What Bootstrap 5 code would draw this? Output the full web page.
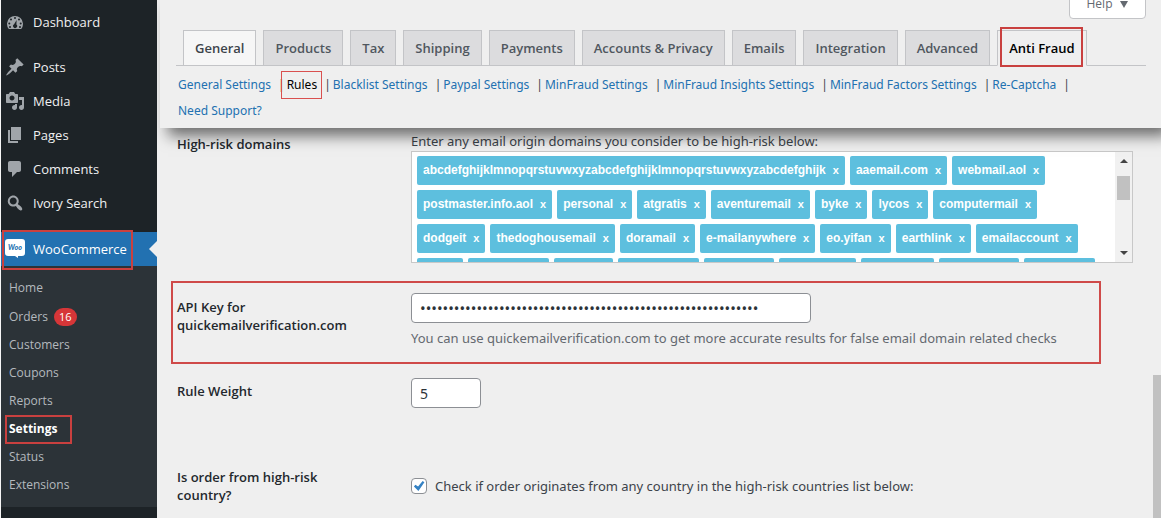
<!DOCTYPE html>
<html lang="en">
<head>
<meta charset="utf-8">
<meta name="viewport" content="width=device-width, initial-scale=1">
<title>WooCommerce Settings – Anti Fraud</title>
<link href="https://cdn.jsdelivr.net/npm/bootstrap@5.3.0/dist/css/bootstrap.min.css" rel="stylesheet">
<style>
  body { font: 13px/20px "Open Sans", "Noto Sans", sans-serif; color: #3c434a; background: #efefef; }
  a { text-decoration: none; }

  /* Sidebar */
  .admin-menu { width: 157px; background: #1d2327; border-left: 1px solid #f6f6f6; padding-top: 5px; }
  .menu-link { height: 34px; padding-left: 4px; gap: 8px; color: #f0f0f1; white-space: nowrap; }
  .menu-link svg { width: 20px; height: 20px; fill: #a0a5aa; flex: none; }
  .menu-gap { margin-bottom: 11px; }
  .menu-gap-end { margin-bottom: 12px; }
  .menu-link.current { background: #2271b1; color: #fff; position: relative; }
  .menu-link.current::after { content: ""; position: absolute; right: 0; top: 9px; border: 8px solid transparent; border-left: 0; border-right-color: #efefef; }
  .sub-menu { background: #2c3338; padding: 8px 0 8px; }
  .sub-menu a { height: 28px; padding-left: 8px; gap: 6px; color: #b4b9be; font-size: 12px; }
  .sub-menu a.with-count { height: 29px; }
  .sub-menu a.active { color: #fff; font-weight: 700; }
  .count { background: #d63638; color: #fff; font-size: 11px; line-height: 18px; padding: 0 5px; }
  .marked { position: relative; }
  .marked::before { content: ""; position: absolute; border: 2px solid #c9403f; pointer-events: none; z-index: 1; }
  .mark-woo::before { left: 1px; top: -2px; width: 131px; height: 40px; }
  .mark-settings::before { left: 4px; top: 0; width: 67px; height: 29px; }
  .mark-tab::before { inset: -4px 3px -2px 2px; }
  .mark-rules::before { inset: -5px -5px -6px -6px; border: 1px solid #d9504f; }

  /* Header */
  .top-bar { z-index: 2; height: 128px; margin-left: 3px; padding: 0 15px 0 16px; background: #efefef; box-shadow: 8px 8px 14px rgba(0,0,0,.55); }
  .help-btn { height: 27px; margin-top: -8px; width: 77px; padding: 0 0 3px; background: #fff; border: 1px solid #c3c4c7; border-radius: 0 0 4px 4px; color: #646970; font-size: 12px; line-height: 22px; gap: 8px; }
  .help-btn::after { content: ""; border: 4px solid transparent; border-top: 7px solid #646970; border-bottom: 0; }
  .tab-bar { margin-top: 11px; padding-left: 7px; gap: 7px; border-bottom: 1px solid #c3c4c7; }
  .tab-bar a { height: 36px; margin-bottom: -1px; padding: 0 11px; border: 1px solid #c3c4c7; background: #dcdcde; color: #50575e; font-weight: 600; line-height: 34px; white-space: nowrap; }
  .tab-bar a.hovered { background: #f6f6f6; color: #3c434a; }
  .tab-bar a.active { background: #efefef; border-bottom-color: #efefef; color: #000; }
  .section-links { padding: 6px 0 0 2px; font-family: "Noto Sans", sans-serif; font-size: 12px; line-height: 26px; }
  .section-links a { color: #2271b1; line-height: 18px; }
  .section-links a.active { color: #000; }
  .section-links li:not(:first-child, .support)::before { content: "|"; margin: 0 2px 0 7px; }

  /* Form */
  .settings { padding: 3px 0 0 14px; font-family: "Noto Sans", sans-serif; }
  .field-row { padding-left: 6px; }
  .field-label { width: 234px; padding-right: 60px; font-family: "Open Sans", sans-serif; line-height: 18px; font-weight: 600; color: #23282d; }
  .field-body { min-width: 0; flex: 1; }
  .domain-box { height: 112px; margin-right: 28px; background: #fff; border: 1px solid #c8c8c8; }
  .chip-area { padding: 4px 5px; gap: 5px; }
  .chip { height: 29px; padding: 0 6px; background: #5dbfde; border-radius: 2px; color: #fff; font: bold 12px/28px "Liberation Sans", Arial, sans-serif; white-space: nowrap; }
  .chip button { border: 0; padding: 0; margin-left: 7px; background: none; color: inherit; font: bold 11px/28px "Liberation Sans", Arial, sans-serif; }
  .scroll-rail { width: 17px; flex: none; background: #f1f1f1; padding: 7px 0; }
  .scroll-rail .thumb { width: 13px; height: 24px; margin-top: 13px; background: #c1c1c1; }
  .arrow-up, .arrow-down { border: 4px solid transparent; }
  .arrow-up { border-top: 0; border-bottom-color: #444; }
  .arrow-down { border-bottom: 0; border-top-color: #444; }
  .boxed { margin: 18px 60px 14px 0; padding: 10px 0 14px 4px; border: 2px solid #cf4a49; }
  .boxed .field-label { padding-top: 5px; }
  .text-field { height: 30px; padding: 0 8px; border: 1px solid #8c8f94; border-radius: 4px; color: #2c3338; background: #fff; font-size: 14px; }
  .key-field { width: 400px; font-size: 15px; }
  .weight-field { width: 70px; }
  .weight-row { margin-bottom: 60px; }
  .hint { color: #646970; padding-top: 5px; }
  .tick { appearance: none; width: 16px; height: 16px; margin: 0; border: 1px solid #8c8f94; border-radius: 4px; background: #fff; }
  .tick:checked { background: #fff url("data:image/svg+xml,%3Csvg xmlns='http://www.w3.org/2000/svg' viewBox='0 0 20 20'%3E%3Cpath d='M14.8 3.3L17.2 5 9.2 16.7 3.2 10.8l2-2.4 3.6 2.4z' fill='%233582c4'/%3E%3C/svg%3E") center/15px; }
  .page-thumb { right: 0; top: 375px; bottom: 0; width: 8px; background: #c1c1c1; }
</style>
</head>
<body>
<div class="d-flex vh-100 overflow-hidden position-relative">
  <nav class="admin-menu flex-shrink-0" aria-label="Admin">
    <a href="#" class="menu-link menu-gap d-flex align-items-center"><svg viewBox="0 0 20 20"><path fill-rule="evenodd" d="M3.8 17h12.4A8 8 0 1 0 3.8 17zM10 5a1 1 0 1 1 0 2 1 1 0 0 1 0-2zM6 6.5a1 1 0 1 1 0 2 1 1 0 0 1 0-2zM14 6.5a1 1 0 1 1 0 2 1 1 0 0 1 0-2zM4.300 10.500a1 1 0 1 1 0 2 1 1 0 0 1 0-2zM15.700 10.500a1 1 0 1 1 0 2 1 1 0 0 1 0-2zM11.600 8l-.2 4.500a2 2 0 1 1-2.300-.2zM5 14a1 1 0 1 1 0 2 1 1 0 0 1 0-2zM15 14a1 1 0 1 1 0 2 1 1 0 0 1 0-2z"/></svg>Dashboard</a>
    <a href="#" class="menu-link d-flex align-items-center"><svg viewBox="0 0 20 20"><path d="M10.440 3.020l1.820-1.820 6.360 6.350-1.830 1.820c-1.050-.68-2.480-.57-3.410.36l-.75.75c-.92.93-1.040 2.350-.35 3.410l-1.830 1.820-2.410-2.410-2.800 2.790c-.42.42-3.380 2.710-3.800 2.290s1.860-3.390 2.280-3.810l2.790-2.790L4.100 9.360l1.830-1.820c1.050.69 2.480.57 3.400-.36l.75-.75c.93-.92 1.050-2.350.36-3.410z"/></svg>Posts</a>
    <a href="#" class="menu-link d-flex align-items-center"><svg viewBox="0 0 20 20"><path d="M13 11V4c0-.55-.45-1-1-1h-1.670L9 1H5L3.670 3H2c-.55 0-1 .45-1 1v7c0 .55.45 1 1 1h10c.55 0 1-.45 1-1zM7 4.500c1.380 0 2.500 1.120 2.500 2.500S8.380 9.500 7 9.500 4.500 8.380 4.500 7 5.620 4.500 7 4.500zM14 6h5v10.500c0 1.380-1.120 2.500-2.500 2.500S14 17.880 14 16.500s1.120-2.500 2.500-2.500c.17 0 .34.02.5.05V9h-3V6zm-4 8.050V13h2v3.500c0 1.380-1.120 2.500-2.500 2.500S7 17.880 7 16.500 8.120 14 9.500 14c.17 0 .34.02.5.05z"/></svg>Media</a>
    <a href="#" class="menu-link d-flex align-items-center"><svg viewBox="0 0 20 20"><path d="M6 15V2h10v13H6zm-1 1h8v2H3V5h2v11z"/></svg>Pages</a>
    <a href="#" class="menu-link d-flex align-items-center"><svg viewBox="0 0 20 20"><path d="M5 2h9c1.100 0 2 .9 2 2v7c0 1.100-.9 2-2 2h-2l-5 5v-5H5c-1.100 0-2-.9-2-2V4c0-1.100.9-2 2-2z"/></svg>Comments</a>
    <a href="#" class="menu-link menu-gap-end d-flex align-items-center"><svg viewBox="0 0 20 20"><path d="M12.140 4.180c1.870 1.870 2.110 4.750.72 6.890.12.1.22.21.36.31.2.16.47.36.81.59.34.24.56.39.66.47.42.31.73.57.94.78.32.32.6.65.84 1 .25.35.44.69.59 1.040.14.35.21.68.18 1-.02.32-.14.59-.36.81s-.49.34-.81.36c-.31.02-.65-.04-.99-.19-.35-.14-.7-.34-1.040-.59-.35-.24-.68-.52-1-.84-.21-.21-.47-.52-.77-.93-.1-.13-.25-.35-.47-.66-.22-.32-.4-.57-.56-.78-.16-.2-.29-.35-.44-.5-2.070 1.090-4.690.76-6.440-.98-2.140-2.150-2.140-5.640 0-7.780 2.150-2.150 5.630-2.150 7.780 0zm-1.410 6.360c1.360-1.370 1.360-3.580 0-4.950-1.370-1.370-3.590-1.370-4.950 0-1.370 1.370-1.370 3.580 0 4.950 1.360 1.370 3.580 1.370 4.950 0z"/></svg>Ivory Search</a>
    <a href="#" class="menu-link current marked mark-woo d-flex align-items-center"><svg viewBox="0 0 20 20"><path fill="#fff" d="M3 0h14a3 3 0 0 1 3 3v11a3 3 0 0 1-3 3h-4v2l-3-2H3a3 3 0 0 1-3-3V3a3 3 0 0 1 3-3z"/><text x="10" y="11" text-anchor="middle" font-family="Lato, sans-serif" font-size="7" font-weight="900" font-style="italic" fill="#2271b1">Woo</text></svg>WooCommerce</a>
    <div class="sub-menu">
      <a href="#" class="d-flex align-items-center">Home</a>
      <a href="#" class="with-count d-flex align-items-center">Orders <span class="count rounded-pill">16</span></a>
      <a href="#" class="d-flex align-items-center">Customers</a>
      <a href="#" class="d-flex align-items-center">Coupons</a>
      <a href="#" class="d-flex align-items-center">Reports</a>
      <a href="#" class="d-flex align-items-center active marked mark-settings">Settings</a>
      <a href="#" class="d-flex align-items-center">Status</a>
      <a href="#" class="d-flex align-items-center">Extensions</a>
    </div>
  </nav>

  <main class="flex-grow-1 overflow-hidden">
    <header class="top-bar position-relative">
      <div class="d-flex justify-content-end"><button type="button" class="help-btn d-flex align-items-center justify-content-center">Help</button></div>
      <nav class="tab-bar d-flex" aria-label="Settings tabs">
        <a href="#" class="hovered">General</a>
        <a href="#">Products</a>
        <a href="#">Tax</a>
        <a href="#">Shipping</a>
        <a href="#">Payments</a>
        <a href="#">Accounts &amp; Privacy</a>
        <a href="#">Emails</a>
        <a href="#">Integration</a>
        <a href="#">Advanced</a>
        <a href="#" class="active marked mark-tab">Anti Fraud</a>
      </nav>
      <ul class="section-links list-unstyled d-flex flex-wrap mb-0">
        <li><a href="#">General Settings</a></li>
        <li><a href="#" class="active marked mark-rules">Rules</a></li>
        <li><a href="#">Blacklist Settings</a></li>
        <li><a href="#">Paypal Settings</a></li>
        <li><a href="#">MinFraud Settings</a></li>
        <li><a href="#">MinFraud Insights Settings</a></li>
        <li><a href="#">MinFraud Factors Settings</a></li>
        <li><a href="#">Re-Captcha</a></li>
        <li></li>
        <li class="w-100 support"><a href="#">Need Support?</a></li>
      </ul>
    </header>

    <form class="settings">
      <div class="field-row d-flex">
        <div class="field-label pt-1">High-risk domains</div>
        <div class="field-body">
          <div>Enter any email origin domains you consider to be high-risk below:</div>
          <div class="domain-box d-flex overflow-hidden">
            <div class="chip-area d-flex flex-wrap align-content-start flex-grow-1">
              <span class="chip">abcdefghijklmnopqrstuvwxyzabcdefghijklmnopqrstuvwxyzabcdefghijk<button type="button">x</button></span>
              <span class="chip">aaemail.com<button type="button">x</button></span>
              <span class="chip">webmail.aol<button type="button">x</button></span>
              <span class="chip">postmaster.info.aol<button type="button">x</button></span>
              <span class="chip">personal<button type="button">x</button></span>
              <span class="chip">atgratis<button type="button">x</button></span>
              <span class="chip">aventuremail<button type="button">x</button></span>
              <span class="chip">byke<button type="button">x</button></span>
              <span class="chip">lycos<button type="button">x</button></span>
              <span class="chip">computermail<button type="button">x</button></span>
              <span class="chip">dodgeit<button type="button">x</button></span>
              <span class="chip">thedoghousemail<button type="button">x</button></span>
              <span class="chip">doramail<button type="button">x</button></span>
              <span class="chip">e-mailanywhere<button type="button">x</button></span>
              <span class="chip">eo.yifan<button type="button">x</button></span>
              <span class="chip">earthlink<button type="button">x</button></span>
              <span class="chip">emailaccount<button type="button">x</button></span>
              <span class="chip" style="width:46px"></span>
              <span class="chip" style="width:81px"></span>
              <span class="chip" style="width:59px"></span>
              <span class="chip" style="width:81px"></span>
              <span class="chip" style="width:70px"></span>
              <span class="chip" style="width:77px"></span>
              <span class="chip" style="width:73px"></span>
              <span class="chip" style="width:80px"></span>
              <span class="chip" style="width:71px"></span>
            </div>
            <div class="scroll-rail d-flex flex-column align-items-center">
              <span class="arrow-up"></span><span class="thumb"></span><span class="arrow-down mt-auto"></span>
            </div>
          </div>
        </div>
      </div>

      <div class="boxed d-flex">
        <label class="field-label" for="apikey">API Key for quickemailverification.com</label>
        <div class="field-body">
          <input id="apikey" class="text-field key-field d-block" type="password" value="012345678901234567890123456789012345678901234567890123456789">
          <div class="hint">You can use quickemailverification.com to get more accurate results for false email domain related checks</div>
        </div>
      </div>

      <div class="field-row d-flex weight-row">
        <label class="field-label pt-1" for="weight">Rule Weight</label>
        <div class="field-body"><input id="weight" class="text-field weight-field d-block" type="text" value="5"></div>
      </div>

      <div class="field-row d-flex country-row">
        <div class="field-label">Is order from high-risk country?</div>
        <div class="field-body d-flex align-items-center gap-2">
          <input id="country" class="tick" type="checkbox" checked>
          <label for="country">Check if order originates from any country in the high-risk countries list below:</label>
        </div>
      </div>
    </form>
  </main>
  <div class="page-thumb position-absolute"></div>
</div>
<script src="https://cdn.jsdelivr.net/npm/bootstrap@5.3.0/dist/js/bootstrap.bundle.min.js"></script>
</body>
</html>
